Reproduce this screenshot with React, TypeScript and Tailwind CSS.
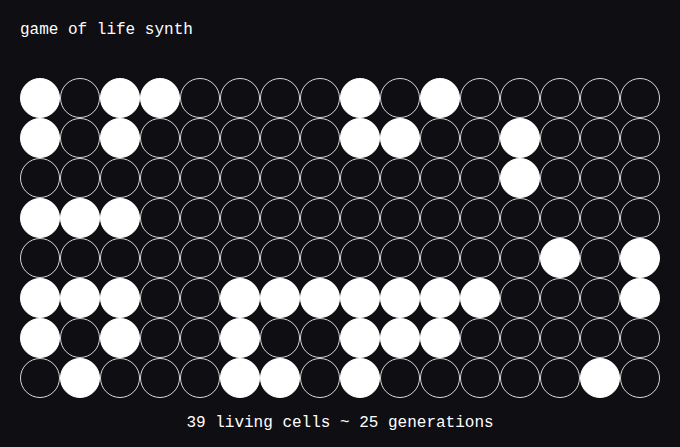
const ROWS: number[][] = [
  [0, 2, 3, 8, 10],
  [0, 2, 8, 9, 12],
  [12],
  [0, 1, 2],
  [13, 15],
  [0, 1, 2, 5, 6, 7, 8, 9, 10, 11, 15],
  [0, 2, 5, 8, 9, 10],
  [1, 5, 6, 8, 14],
];

const COLS = 16;

export default function App() {
  return (
    <div className="min-h-screen bg-[#0f0e13] px-[20px] pt-[21px] text-white font-['Liberation_Mono',monospace]">
      <h1 className="text-base leading-[18px]">game of life synth</h1>

      <div className="mt-[39px] grid w-[640px] grid-cols-[repeat(16,40px)]">
        {ROWS.map((alive, r) =>
          Array.from({ length: COLS }, (_, c) => (
            <div
              key={`${r}-${c}`}
              className={
                alive.includes(c)
                  ? "h-[40px] w-[40px] rounded-full border border-white bg-white"
                  : "h-[40px] w-[40px] rounded-full border border-[#d8d8d8]"
              }
            />
          ))
        )}
      </div>

      <p className="mt-[16px] text-center text-base leading-[18px]">
        39 living cells ~ 25 generations
      </p>
    </div>
  );
}
